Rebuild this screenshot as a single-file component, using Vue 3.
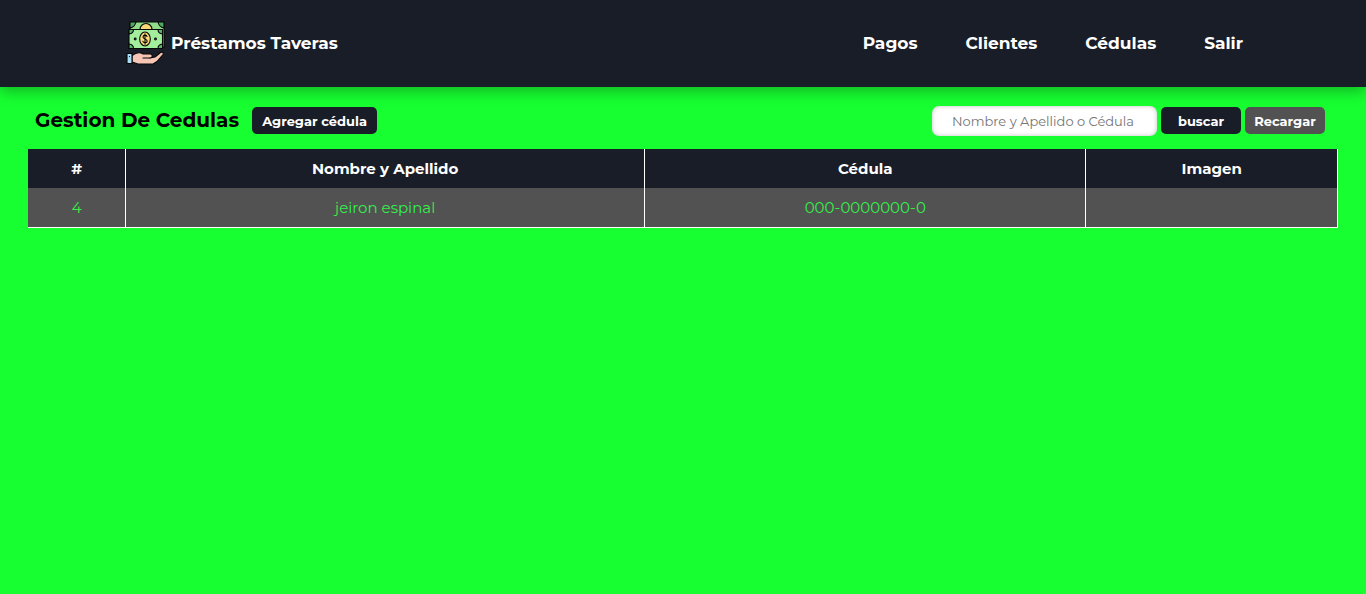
<script setup>
import { ref } from 'vue'

const links = ['Pagos', 'Clientes', 'Cédulas', 'Salir']
const rows = [{ id: 4, name: 'jeiron espinal', document: '000-0000000-0' }]
const query = ref('')
</script>

<template>
  <header class="header">
    <a class="brand" href="#">
      <svg class="logo" viewBox="0 0 40 47" aria-hidden="true">
        <g stroke="#050807" stroke-width="1.1" stroke-linejoin="round" stroke-linecap="round">
          <path d="M4 2h34v25H4z" fill="#91dc8b" />
          <path d="M4 2h6q-1 5-6 6zM38 2h-6q1 5 6 6z" fill="#50a661" />
          <path d="M14 9.500a6 6 0 0 1 12 0z" fill="#fbd979" />
          <path d="M3 9.500h33.500v19H3z" fill="#a3ee9c" />
          <path d="M3 9.500h4.500q0 4-4.500 4.500zM36.500 9.500H32q0 4 4.500 4.500zM3 28.500h4.500q0-4-4.500-4.500zM36.500 28.500H32q0-4 4.500-4.500z" fill="#5bb56b" />
          <ellipse cx="19" cy="19" rx="5.300" ry="7" fill="#fbd979" />
          <path d="M21 16.500c-.5-2-4-1.800-4 .5 0 2.200 4.200 1.600 4.200 4 0 2.200-3.700 2.200-4.300.3M19 13.800v10.400" fill="none" />
          <circle cx="9.200" cy="19" r=".9" fill="#fbd979" />
          <circle cx="29.500" cy="19" r=".9" fill="#fbd979" />
          <path d="M6 35.500c4-3 8-3.500 11-1.500h7c3 0 3 4 0 4l5-1 5.500-4.500c2-1 3.500.5 2.500 2l-6 7-4 2.500H12l-6-2z" fill="#f7c5b5" />
          <path d="M17 38h7" fill="none" />
          <path d="M1 33.500h5v10H1z" fill="#a9ddf5" />
          <path d="M3.500 36.500v.1" fill="none" />
        </g>
      </svg>
      <span>Préstamos Taveras</span>
    </a>
    <nav class="nav" aria-label="Principal">
      <a v-for="link in links" :key="link" href="#">{{ link }}</a>
    </nav>
  </header>
  <main class="content">
    <div class="toolbar">
      <div class="heading">
        <h1>Gestion De Cedulas</h1>
        <button class="button add" type="button">Agregar cédula</button>
      </div>
      <form class="search" @submit.prevent>
        <input v-model="query" type="text" placeholder="Nombre y Apellido o Cédula" aria-label="Nombre y Apellido o Cédula" />
        <button class="button" type="submit">buscar</button>
        <button class="button reload" type="button">Recargar</button>
      </form>
    </div>
    <table>
      <colgroup>
        <col class="col-id" />
        <col class="col-name" />
        <col class="col-document" />
        <col />
      </colgroup>
      <thead>
        <tr>
          <th scope="col">#</th>
          <th scope="col">Nombre y Apellido</th>
          <th scope="col">Cédula</th>
          <th scope="col">Imagen</th>
        </tr>
      </thead>
      <tbody>
        <tr v-for="row in rows" :key="row.id">
          <td>{{ row.id }}</td>
          <td>{{ row.name }}</td>
          <td>{{ row.document }}</td>
          <td></td>
        </tr>
      </tbody>
    </table>
  </main>
</template>

<style>
body {
  background: #17ff31;
  font-family: Montserrat, Inter, "Open Sans", sans-serif;
}
</style>

<style scoped>
.header {
  display: flex;
  align-items: center;
  justify-content: space-between;
  padding: 20px 9%;
  background: #191d27;
  box-shadow: 0 4px 14px rgba(0, 0, 0, 0.3);
}
.brand {
  display: flex;
  align-items: center;
  gap: 5px;
  padding-left: 3px;
}
.brand,
.nav a {
  color: #fff;
  font-size: 17px;
  font-weight: 700;
  line-height: 24px;
  text-decoration: none;
}
.brand span,
.nav {
  padding-bottom: 2px;
}
.logo {
  width: 40px;
  height: 47px;
}
.nav {
  display: flex;
  gap: 48px;
}
.content {
  padding: 19px 28px;
}
.toolbar {
  display: flex;
  align-items: center;
  justify-content: space-between;
  margin-bottom: 13px;
  padding: 0 13px 0 7px;
}
.heading,
.search {
  display: flex;
  align-items: center;
}
.heading {
  gap: 13px;
}
.search {
  gap: 4px;
}
h1 {
  margin: 0;
  padding-bottom: 3px;
  color: #000;
  font-size: 20px;
  font-weight: 700;
  line-height: 24px;
}
.button {
  width: 80px;
  height: 27px;
  margin: 0 0 1px;
  padding: 0;
  border: 0;
  border-radius: 5px;
  background: #191d27;
  color: #fff;
  font-family: inherit;
  font-size: 13px;
  font-weight: 700;
}
.add {
  width: 125px;
}
.reload {
  background: #525252;
}
.search input {
  box-sizing: border-box;
  width: 225px;
  height: 30px;
  padding: 0 20px;
  border: 0;
  border-radius: 7px;
  background: #fff;
  box-shadow: inset 0 0 4px rgba(0, 0, 0, 0.25);
  color: #333;
  font-family: inherit;
  font-size: 13px;
}
.search input::placeholder {
  color: #757575;
}
table {
  width: 100%;
  border-collapse: separate;
  border-spacing: 0;
  table-layout: fixed;
  border-bottom: 1px solid #fff;
  text-align: center;
  font-size: 15px;
  line-height: 23px;
}
.col-id {
  width: 7.5%;
}
.col-name {
  width: 39.6%;
}
.col-document {
  width: 33.7%;
}
th,
td {
  height: 23px;
  padding: 8px;
  border-right: 1px solid #fff;
}
th {
  background: #191d27;
  color: #fff;
  font-weight: 700;
}
td {
  background: #525252;
  color: #34f04a;
}
</style>
